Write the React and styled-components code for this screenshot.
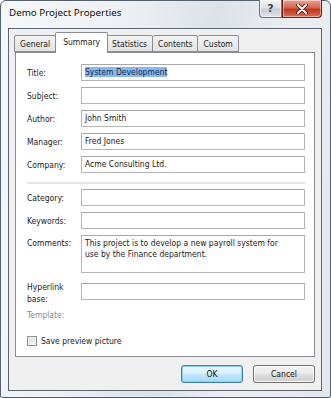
import React from 'react';
import styled, { createGlobalStyle } from 'styled-components';

const Global = createGlobalStyle`
  html, body {
    margin: 0;
    padding: 0;
    background: #ffffff;
  }
  * { box-sizing: border-box; }
`;

const Frame = styled.div`
  width: 331px;
  height: 398px;
  padding: 0 8px 6px 7px;
  display: flex;
  flex-direction: column;
  border: 1px solid #55606e;
  border-radius: 6px 6px 2px 2px;
  background: linear-gradient(100deg, #f6f7f9 0%, #eef1f4 30%, #dde2e7 55%, #eceff2 75%, #e3e6ea 100%);
  font-family: "DejaVu Sans Condensed", "DejaVu Sans", sans-serif;
  font-size: 8.5px;
  color: #1b1b1b;
`;

const TitleBar = styled.div`
  height: 27px;
  display: flex;
  align-items: flex-start;
  justify-content: space-between;
`;

const Caption = styled.div`
  padding: 5px 0 0 1px;
  font-family: "Noto Sans", "Liberation Sans", sans-serif;
  font-size: 9.8px;
  color: #111;
`;

const Caps = styled.div`
  display: flex;
  margin-top: -1px;
`;

const CapButton = styled.div`
  height: 18px;
  width: ${p => p.$w}px;
  display: flex;
  align-items: center;
  justify-content: center;
  border: 1px solid ${p => (p.$close ? '#6b1d14' : '#6d7480')};
  border-top: none;
  border-radius: ${p => (p.$close ? '0 0 4px 0' : '0 0 0 4px')};
  background: ${p =>
    p.$close
      ? 'linear-gradient(#e8a493 0%, #d2664f 45%, #c2361d 55%, #d6705a 100%)'
      : 'linear-gradient(#f3f4f6 0%, #dde1e6 45%, #c9ced5 55%, #dfe3e8 100%)'};
  box-shadow: inset 0 0 0 1px rgba(255, 255, 255, 0.45);
  color: #3b4350;
  font-family: "DejaVu Sans", sans-serif;
  font-size: 11px;
  font-weight: bold;
`;

const Client = styled.div`
  flex: 1;
  display: flex;
  flex-direction: column;
  border: 1px solid #5c6672;
  background: #f0f0f0;
  padding: 3px 6px 0 5px;
`;

const Tabs = styled.div`
  display: flex;
  align-items: flex-end;
  height: 20px;
  position: relative;
  z-index: 1;
`;

const Tab = styled.div`
  height: 17px;
  padding: 1px 5px 0;
  display: flex;
  align-items: center;
  border: 1px solid #898c95;
  border-left-width: ${p => (p.$first ? 1 : 0)}px;
  border-radius: 2px 2px 0 0;
  background: linear-gradient(#f3f3f3, #e3e3e3);
`;

const ActiveTab = styled(Tab)`
  height: 21px;
  padding: 0 7px 3px;
  margin: 0 -1px -1px;
  border-left-width: 1px;
  border-bottom: none;
  background: #ffffff;
  position: relative;
  z-index: 2;
`;

const Panel = styled.div`
  height: 305px;
  margin-left: 1px;
  border: 1px solid #898c95;
  background: #ffffff;
  padding: 11px 9px 0 11px;
  display: flex;
  flex-direction: column;
`;

const Group = styled.div`
  display: flex;
  flex-direction: column;
  gap: 6px;
`;

const Row = styled.div`
  display: flex;
  align-items: ${p => (p.$top ? 'flex-start' : 'center')};
  margin-top: ${p => p.$mt || 0}px;
`;

const Label = styled.div`
  width: 54px;
  flex-shrink: 0;
  line-height: ${p => p.$lh || 12}px;
  color: ${p => (p.$disabled ? '#8d8d8d' : '#1b1b1b')};
  margin-top: ${p => p.$shift || 0}px;
`;

const Field = styled.div`
  flex: 1;
  height: ${p => p.$h || 17}px;
  border: 1px solid #b3b5b9;
  border-top-color: #a6a8ad;
  background: #ffffff;
  padding: 2px 3px;
  line-height: 11px;
  white-space: pre-wrap;
  overflow: hidden;
`;

const Selected = styled.span`
  background: #89b8ea;
  color: #102a55;
`;

const Separator = styled.div`
  height: 2px;
  background: #e4e5e7;
  margin: 9px 0 5px;
`;

const CheckRow = styled.div`
  display: flex;
  align-items: center;
  gap: 4px;
  margin-top: 15px;
`;

const Check = styled.div`
  width: 10px;
  height: 10px;
  border: 1px solid #8f8f8f;
  background: linear-gradient(135deg, #dcdcdc, #f7f7f7);
  box-shadow: inset 0 0 0 1px #f4f4f4;
`;

const Footer = styled.div`
  display: flex;
  justify-content: flex-end;
  gap: 10px;
  padding: 8px 0 0;
`;

const Button = styled.div`
  width: 62px;
  height: 18px;
  display: flex;
  align-items: center;
  justify-content: center;
  border: 1px solid ${p => (p.$default ? '#3c7fb1' : '#707070')};
  border-radius: 3px;
  background: ${p =>
    p.$default
      ? 'linear-gradient(#eaf6fd 0%, #d9f0fc 45%, #bee6fd 55%, #a7d9f5 100%)'
      : 'linear-gradient(#f2f2f2 0%, #ebebeb 45%, #dddddd 55%, #cfcfcf 100%)'};
  box-shadow: inset 0 0 0 1px ${p => (p.$default ? '#8fd1f3' : '#fcfcfc')};
  color: #111;
`;

const fields = [
  { label: 'Title:', value: 'System Development', selected: true },
  { label: 'Subject:', value: '' },
  { label: 'Author:', value: 'John Smith' },
  { label: 'Manager:', value: 'Fred Jones' },
  { label: 'Company:', value: 'Acme Consulting Ltd.' },
];

const tabs = ['General', 'Summary', 'Statistics', 'Contents', 'Custom'];

export default function App() {
  return (
    <>
      <Global />
      <Frame>
        <TitleBar>
          <Caption>Demo Project Properties</Caption>
          <Caps>
            <CapButton $w={23}>?</CapButton>
            <CapButton $w={40} $close>
              <svg width="12" height="10" viewBox="0 0 12 10">
                <path d="M2 1 L10 9 M10 1 L2 9" stroke="#4a1208" strokeWidth="3.6" strokeLinecap="round" />
                <path d="M2 1 L10 9 M10 1 L2 9" stroke="#ffffff" strokeWidth="2" strokeLinecap="round" />
              </svg>
            </CapButton>
          </Caps>
        </TitleBar>
        <Client>
          <Tabs>
            {tabs.map((t, i) =>
              t === 'Summary' ? (
                <ActiveTab key={t}>{t}</ActiveTab>
              ) : (
                <Tab key={t} $first={i === 0}>
                  {t}
                </Tab>
              )
            )}
          </Tabs>
          <Panel>
            <Group>
              {fields.map(f => (
                <Row key={f.label}>
                  <Label>{f.label}</Label>
                  <Field>{f.selected ? <Selected>{f.value}</Selected> : f.value}</Field>
                </Row>
              ))}
            </Group>
            <Separator />
            <Group>
              <Row>
                <Label>Category:</Label>
                <Field />
              </Row>
              <Row>
                <Label>Keywords:</Label>
                <Field />
              </Row>
              <Row $top>
                <Label $shift={2}>Comments:</Label>
                <Field $h={38}>
                  {'This project is to develop a new payroll system for\nuse by the Finance department.'}
                </Field>
              </Row>
              <Row $top $mt={4}>
                <Label $lh={12} $shift={-2}>
                  Hyperlink
                  <br />
                  base:
                </Label>
                <Field />
              </Row>
              <Row $mt={-2}>
                <Label $disabled>Template:</Label>
              </Row>
            </Group>
            <CheckRow>
              <Check />
              <span>Save preview picture</span>
            </CheckRow>
          </Panel>
          <Footer>
            <Button $default>OK</Button>
            <Button>Cancel</Button>
          </Footer>
        </Client>
      </Frame>
    </>
  );
}
